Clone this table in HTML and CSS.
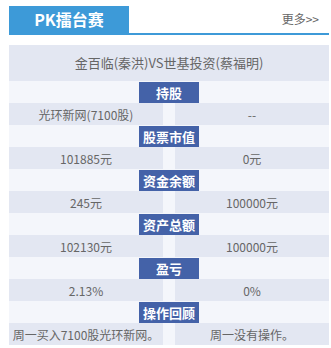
FILE: index.html
```html
<!DOCTYPE html>
<html lang="zh">
<head>
<meta charset="utf-8">
<link rel="stylesheet" href="styles.css">
</head>
<body>
<div class="panel">
  <div class="head">
    <div class="tab">PK擂台赛</div>
    <a class="more">更多&gt;&gt;</a>
  </div>
  <div class="board">
    <div class="match">金百临(秦洪)VS世基投资(蔡福明)</div>

    <div class="label-row"><span class="label">持股</span></div>
    <div class="data-row"><div class="cell">光环新网(7100股)</div><div class="cell">--</div></div>

    <div class="label-row"><span class="label">股票市值</span></div>
    <div class="data-row"><div class="cell">101885元</div><div class="cell">0元</div></div>

    <div class="label-row"><span class="label">资金余额</span></div>
    <div class="data-row"><div class="cell">245元</div><div class="cell">100000元</div></div>

    <div class="label-row"><span class="label">资产总额</span></div>
    <div class="data-row"><div class="cell">102130元</div><div class="cell">100000元</div></div>

    <div class="label-row"><span class="label">盈亏</span></div>
    <div class="data-row"><div class="cell">2.13%</div><div class="cell">0%</div></div>

    <div class="label-row"><span class="label">操作回顾</span></div>
    <div class="data-row"><div class="cell">周一买入7100股光环新网。</div><div class="cell">周一没有操作。</div></div>
  </div>
</div>
</body>
</html>
```
FILE: styles.css
```css
html, body {
  margin: 0;
  padding: 0;
  background: #fff;
}
body {
  font-family: "Noto Sans CJK SC", "Noto Sans", sans-serif;
  color: #666;
}
.panel {
  width: 320px;
  margin: 0 0 0 9px;
  padding-top: 6px;
}
.head {
  display: flex;
  justify-content: space-between;
  align-items: center;
  height: 27px;
  border-bottom: 2px solid #3d9ad8;
}
.tab {
  width: 120px;
  height: 27px;
  background: #3d9ad8;
  color: #fff;
  font-weight: bold;
  font-size: 16px;
  line-height: 27px;
  text-align: center;
}
.more {
  font-size: 12px;
  color: #666;
  margin-right: 10px;
  margin-top: -2px;
  line-height: 16px;
}
.board {
  margin-top: 10px;
  background: #f4f6fb;
}
.match {
  height: 36px;
  line-height: 36px;
  background: #e3e7f2;
  text-align: center;
  font-size: 13px;
  color: #666;
}
.label-row {
  height: 22px;
  display: flex;
  justify-content: center;
  align-items: flex-end;
}
.label {
  width: 60px;
  height: 21px;
  background: #4462a8;
  color: #fff;
  font-weight: bold;
  font-size: 13px;
  line-height: 21px;
  text-align: center;
}
.data-row {
  display: grid;
  grid-template-columns: 154px 154px;
  column-gap: 12px;
  height: 22px;
}
.cell {
  display: flex;
  justify-content: center;
  align-items: center;
  background: #e3e7f2;
  font-size: 12px;
  height: 22px;
  white-space: nowrap;
  color: #666;
}
```
